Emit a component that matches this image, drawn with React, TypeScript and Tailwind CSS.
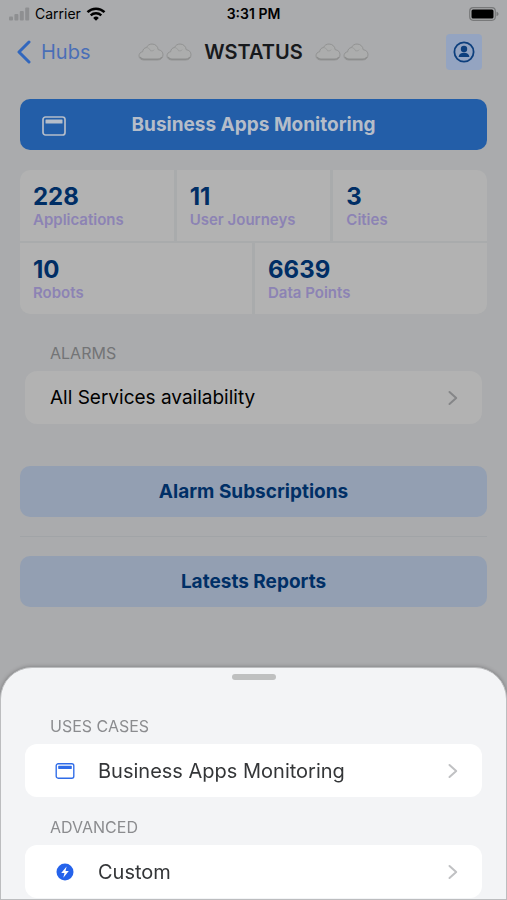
import type { ReactNode } from "react";

type Stat = { value: string; label: string };

const topStats: Stat[] = [
    { value: "228", label: "Applications" },
    { value: "11", label: "User Journeys" },
    { value: "3", label: "Cities" },
];

const bottomStats: Stat[] = [
    { value: "10", label: "Robots" },
    { value: "6639", label: "Data Points" },
];

function WindowIcon({ className }: { className?: string }) {
    return (
        <svg viewBox="0 0 24 20" fill="none" className={className} aria-hidden="true">
            <rect x="1" y="1" width="22" height="18" rx="2.5" stroke="currentColor" strokeWidth="1.7" />
            <rect x="3.5" y="3.5" width="17" height="4" rx="0.6" fill="currentColor" />
        </svg>
    );
}

function BoltIcon({ className }: { className?: string }) {
    return (
        <svg viewBox="0 0 18 18" className={className} aria-hidden="true">
            <circle cx="9" cy="9" r="8.5" fill="#2563eb" />
            <path d="M10.6 3.4 5.2 9.9h3.3l-1.2 4.9 5.5-6.8H9.5z" fill="#fff" />
        </svg>
    );
}

// Pale cloud with a soft shaded underside
function CloudIcon() {
    return (
        <svg viewBox="0 0 26 20" className="h-5 w-[26px]" aria-hidden="true">
            <path
                d="M5.8 18C3 18 1 16.200 1 13.800c0-2.200 1.500-3.800 3.700-4.100.1-2.300 1.600-3.900 3.700-4.100C9.500 3.300 11.600 2 14 2c3.400 0 5.900 2.400 6.200 5.700 2.900.3 4.800 2.300 4.800 5 0 3.100-2.200 5.300-5.400 5.300z"
                fill="#acadad"
                stroke="#929393"
                strokeWidth="1"
            />
            <path d="M2 15c.8 1.500 2.100 2.200 3.800 2.200h13.800c2 0 3.500-.8 4.300-2.200" fill="none" stroke="#8c8d8d" strokeWidth="1.400" />
            <path d="M8.400 5.600c1.900 0 3.100.9 3.600 2.500M12 8.500c1.500.8 3.200.4 4.300-.9" fill="none" stroke="#979898" strokeWidth="0.8" />
        </svg>
    );
}

function UserIcon() {
    return (
        <svg viewBox="0 0 22 22" fill="none" className="size-[22px]" aria-hidden="true">
            <circle cx="11" cy="11" r="9.600" stroke="currentColor" strokeWidth="1.800" />
            <circle cx="11" cy="8" r="3.200" fill="currentColor" />
            <path d="M5.600 16c.3-2.800 2.400-4.200 5.400-4.200s5.100 1.400 5.400 4.200z" fill="currentColor" />
        </svg>
    );
}

function Chevron({ className }: { className?: string }) {
    return (
        <svg viewBox="0 0 10 16" fill="none" className={`h-4 w-2.5 ${className ?? ""}`} aria-hidden="true">
            <path d="M1.500 2 8.200 8l-6.700 6" stroke="currentColor" strokeWidth="2" strokeLinecap="round" strokeLinejoin="round" />
        </svg>
    );
}

function StatusBar() {
    return (
        <div className="grid h-7 grid-cols-3 items-center px-2 text-sm text-black">
            <div className="flex items-center gap-[5px]">
                <svg viewBox="0 0 22 14" className="h-3.5 w-[22px]" fill="#8e8f91" aria-hidden="true">
                    <rect x="1" y="9.500" width="4" height="4" rx="1" />
                    <rect x="6.400" y="7" width="4" height="6.500" rx="1" />
                    <rect x="11.800" y="4" width="4" height="9.500" rx="1" />
                    <rect x="17.200" y="0.500" width="4" height="13" rx="1" />
                </svg>
                <span>Carrier</span>
                <svg viewBox="0 0 20 14" className="h-3.5 w-5" fill="none" stroke="#000" aria-hidden="true">
                    <path d="M1.500 5.200a12.200 12.200 0 0 1 17 0" strokeWidth="2.500" />
                    <path d="M4.700 8.400a7.600 7.600 0 0 1 10.600 0" strokeWidth="2.300" />
                    <path d="M10 13.700 7.200 10.900a4 4 0 0 1 5.600 0z" fill="#000" stroke="none" />
                </svg>
            </div>
            <span className="text-center font-semibold">3:31 PM</span>
            <svg viewBox="0 0 30 14" className="h-3.5 w-[30px] justify-self-end" aria-hidden="true">
                <rect x="0.700" y="0.700" width="25.600" height="12.600" rx="3.500" fill="none" stroke="#78797a" strokeWidth="1.200" />
                <rect x="2.500" y="2.500" width="22" height="9" rx="1.500" fill="#000" />
                <path d="M27.500 4.800c1.300.4 2 1.200 2 2.200s-.7 1.800-2 2.200z" fill="#78797a" />
            </svg>
        </div>
    );
}

function StatCell({ value, label }: Stat) {
    return (
        <div className="flex h-[71px] flex-1 flex-col bg-[#b2b2b2] px-[13px] pt-[13px]">
            <span className="text-2xl/7 font-bold text-[#002e65]">{value}</span>
            <span className="text-[15px]/[18px] font-semibold text-[#8c83b4]">{label}</span>
        </div>
    );
}

function SoftButton({ children }: { children: ReactNode }) {
    return (
        <button type="button" className="h-[51px] w-full rounded-[10px] bg-[#939fb2] pt-0.5 text-[19px] font-bold text-[#002f66]">
            {children}
        </button>
    );
}

function SheetRow({ icon, children }: { icon: ReactNode; children: ReactNode }) {
    return (
        <button type="button" className="flex h-[53px] w-full items-center rounded-xl bg-white pr-6 pl-[30px] text-left text-xl text-[#343638]">
            <span className="flex w-[43px]">{icon}</span>
            <span className="flex-1">{children}</span>
            <Chevron className="text-[#c0c1c3]" />
        </button>
    );
}

export default function App() {
    return (
        <div className="min-h-screen bg-[#aaabad] font-['Inter',sans-serif]">
            <StatusBar />

            <header className="grid h-12 grid-cols-[1fr_auto_1fr] items-center px-4">
                <a href="#" className="flex items-center gap-2.5 text-xl text-[#4a6fb7]">
                    <svg viewBox="0 0 15 24" fill="none" className="h-6 w-[15px]" aria-hidden="true">
                        <path d="M13 2 3 12l10 10" stroke="#3267bd" strokeWidth="3" strokeLinecap="round" strokeLinejoin="round" />
                    </svg>
                    Hubs
                </a>
                <div className="flex items-center gap-3">
                    <div className="flex gap-0.5">
                        <CloudIcon />
                        <CloudIcon />
                    </div>
                    <h1 className="text-xl font-semibold text-[#17191c]">WSTATUS</h1>
                    <div className="flex gap-0.5">
                        <CloudIcon />
                        <CloudIcon />
                    </div>
                </div>
                <button type="button" aria-label="Account" className="mr-[9px] flex size-9 items-center justify-center justify-self-end rounded bg-[#94a4c1] text-[#0d3f7d]">
                    <UserIcon />
                </button>
            </header>

            <main className="px-5 pt-[23px]">
                <button type="button" className="relative flex h-[51px] w-full items-center justify-center rounded-[10px] bg-[#235ea8] pt-0.5 text-[19px] font-bold text-[#b5bdc9]">
                    <WindowIcon className="absolute left-[22px] h-5 w-6" />
                    Business Apps Monitoring
                </button>

                <section className="mt-5 flex flex-col gap-0.5 overflow-hidden rounded-[10px] bg-[#a9abac]">
                    <div className="flex gap-[3px]">
                        {topStats.map((stat) => (
                            <StatCell key={stat.label} {...stat} />
                        ))}
                    </div>
                    <div className="flex gap-[3px]">
                        {bottomStats.map((stat) => (
                            <StatCell key={stat.label} {...stat} />
                        ))}
                    </div>
                </section>

                <section className="mt-[27px] px-[5px]">
                    <h2 className="px-[25px] text-base/6 text-[#737476]">ALARMS</h2>
                    <button type="button" className="mt-1.5 flex h-[53px] w-full items-center justify-between rounded-xl bg-[#b2b2b2] pr-6 pl-[25px] text-left text-[19px] text-black">
                        <span className="pt-0.5">All Services availability</span>
                        <Chevron className="text-[#858688]" />
                    </button>
                </section>

                <div className="mt-[42px]">
                    <SoftButton>Alarm Subscriptions</SoftButton>
                </div>
                <hr className="my-[19px] border-[#a1a4a7]" />
                <SoftButton>Latests Reports</SoftButton>
            </main>

            <section className="fixed inset-x-0 bottom-0 rounded-t-[32px] border border-[#bcbdbf] bg-[#f3f4f6] px-6 pt-1.5 pb-px shadow-[0_0_4px_rgba(0,0,0,0.3)]">
                <div className="mx-auto h-1.5 w-11 rounded-full bg-[#bfc0c0]" />
                <h2 className="mt-[34px] px-[25px] text-base/6 text-[#8b8c8f]">USES CASES</h2>
                <div className="mt-1.5">
                    <SheetRow icon={<WindowIcon className="h-4 w-5 text-[#2f6ce8]" />}>Business Apps Monitoring</SheetRow>
                </div>
                <h2 className="mt-[18px] px-[25px] text-base/6 text-[#8b8c8f]">ADVANCED</h2>
                <div className="mt-1.5">
                    <SheetRow icon={<BoltIcon className="mx-px size-[18px]" />}>Custom</SheetRow>
                </div>
            </section>
        </div>
    );
}
